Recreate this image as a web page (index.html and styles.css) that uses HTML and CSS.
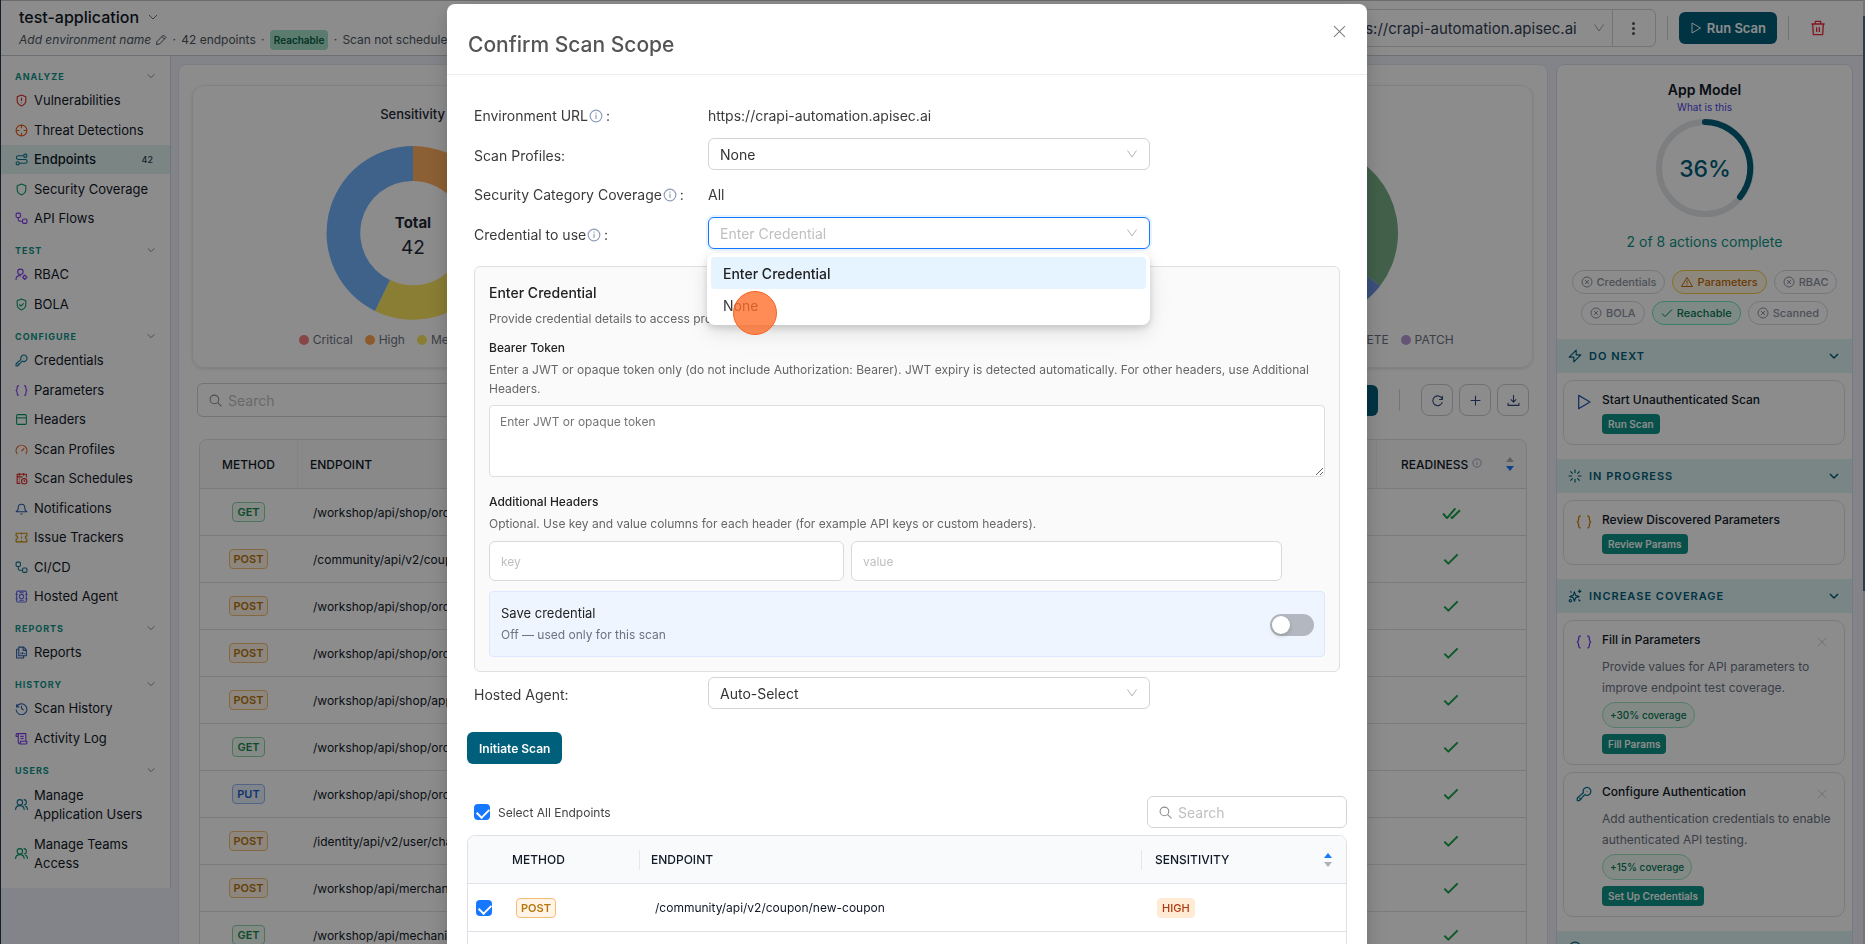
FILE: index.html
```
<!DOCTYPE html>
<html lang="en">

<head>
    <meta charset="utf-8">
    <title>Endpoints - test-application</title>
    <link rel="stylesheet" href="styles.css">
</head>

<body>
    <!-- icon sprite -->
    <svg class="sprite" aria-hidden="true">
        <symbol id="i-down" viewBox="0 0 24 24"><path d="M4 8l8 8 8-8" /></symbol>
        <symbol id="i-select" viewBox="0 0 24 24"><path d="M3 5l9 13 9-13" /></symbol>
        <symbol id="i-shield-alert" viewBox="0 0 24 24"><path d="M12 2l8 3v7c0 5-3 8-8 10-5-2-8-5-8-10V5zM12 7v6M12 16v1" /></symbol>
        <symbol id="i-target" viewBox="0 0 24 24"><circle cx="12" cy="12" r="10" /><path d="M12 2v6M12 16v6M2 12h6M16 12h6" /></symbol>
        <symbol id="i-route" viewBox="0 0 24 24"><circle cx="19" cy="5" r="3" /><circle cx="5" cy="19" r="3" /><path d="M16 5H6a3 3 0 0 0 0 7h13a3 3 0 0 1 0 7H8" /></symbol>
        <symbol id="i-shield" viewBox="0 0 24 24"><path d="M12 2l8 3v7c0 5-3 8-8 10-5-2-8-5-8-10V5z" /></symbol>
        <symbol id="i-shield-check" viewBox="0 0 24 24"><path d="M12 2l8 3v7c0 5-3 8-8 10-5-2-8-5-8-10V5zM8 12l3 3 5-5" /></symbol>
        <symbol id="i-flow" viewBox="0 0 24 24"><rect x="2" y="2" width="8" height="8" rx="2" /><rect x="14" y="13" width="8" height="8" rx="2" /><path d="M6 10v4a3 3 0 0 0 3 3h5" /></symbol>
        <symbol id="i-user-cog" viewBox="0 0 24 24"><circle cx="10" cy="7" r="5" /><path d="M2 22v-2a6 6 0 0 1 9-5" /><circle cx="18" cy="17" r="3" /><path d="M18 12v2M18 20v2M13 17h2M21 17h2" /></symbol>
        <symbol id="i-key" viewBox="0 0 24 24"><path d="M16 2a6 6 0 1 1-3 11l-8 9H2v-4l9-8a6 6 0 0 1 5-8zM5 18l3 3M16 8h1" /></symbol>
        <symbol id="i-braces" viewBox="0 0 24 24"><path d="M7 3c-3 0-3 1-3 4 0 3 0 4-2 5 2 1 2 2 2 5 0 3 0 4 3 4M17 3c3 0 3 1 3 4 0 3 0 4 2 5-2 1-2 2-2 5 0 3 0 4-3 4" /></symbol>
        <symbol id="i-header" viewBox="0 0 24 24"><rect x="3" y="3" width="18" height="18" rx="2" /><path d="M3 9h18" /></symbol>
        <symbol id="i-gauge" viewBox="0 0 24 24"><path d="M4 20a10 10 0 1 1 16 0M12 15l5-5" /></symbol>
        <symbol id="i-calendar" viewBox="0 0 24 24"><path d="M10 21H4V4h17v6M3 9h11M8 2v5M16 2v5M7 13h2M7 17h2" /><circle cx="17" cy="17" r="5" /><path d="M17 14v3h2" /></symbol>
        <symbol id="i-bell" viewBox="0 0 24 24"><path d="M2 18c3-1 4-3 4-8a6 6 0 0 1 12 0c0 5 1 7 4 8zM10 22h4" /></symbol>
        <symbol id="i-ticket" viewBox="0 0 24 24"><path d="M2 4h20v5a3 3 0 0 0 0 6v5H2v-5a3 3 0 0 0 0-6zM12 4v3M12 10v4M12 17v3" /></symbol>
        <symbol id="i-agent" viewBox="0 0 24 24"><rect x="3" y="2" width="18" height="20" rx="2" /><circle cx="12" cy="12" r="4" /><path d="M1 8h4M1 16h4M19 8h4M19 16h4M8 5h8M8 19h8" /></symbol>
        <symbol id="i-report" viewBox="0 0 24 24"><path d="M7 2h9l5 5v11H7zM7 6H3v16h13v-4M15 2v6h6M11 12v3M14 11v4M17 13v2" /></symbol>
        <symbol id="i-history" viewBox="0 0 24 24"><path d="M3 4v5h5M3 9a10 10 0 1 1-1 5M12 7v5l4 3" /></symbol>
        <symbol id="i-scroll" viewBox="0 0 24 24"><path d="M6 8H2V5a2 2 0 0 1 4 0v14a2 2 0 0 0 4 0v-2h12v3a2 2 0 0 1-2 2H8M4 3h16v14M10 8h6M10 12h6" /></symbol>
        <symbol id="i-users" viewBox="0 0 24 24"><circle cx="9" cy="8" r="5" /><path d="M1 22c0-5 3-8 8-8s8 3 8 8M16 3a5 5 0 0 1 0 10M19 15c3 1 4 4 4 7" /></symbol>
        <symbol id="i-pencil" viewBox="0 0 24 24"><path d="M3 21l1-6L17 2l5 5L9 20zM14 5l5 5" /></symbol>
        <symbol id="i-play" viewBox="0 0 24 24"><path d="M4 2l17 10L4 22z" /></symbol>
        <symbol id="i-trash" viewBox="0 0 24 24"><path d="M2 6h20M8 6V2h8v4M4 6l1 16h14l1-16M10 11v7M14 11v7" /></symbol>
        <symbol id="i-search" viewBox="0 0 24 24"><circle cx="10" cy="10" r="8" /><path d="M16 16l7 7" /></symbol>
        <symbol id="i-refresh" viewBox="0 0 24 24"><path d="M21 10a9 9 0 1 0 0 5M21 3v7h-6" /></symbol>
        <symbol id="i-plus" viewBox="0 0 24 24"><path d="M12 3v18M3 12h18" /></symbol>
        <symbol id="i-download" viewBox="0 0 24 24"><path d="M12 2v13M7 10l5 5 5-5M2 16v5h20v-5" /></symbol>
        <symbol id="i-close" viewBox="0 0 24 24"><path d="M2 2l20 20M22 2L2 22" /></symbol>
        <symbol id="i-info" viewBox="0 0 24 24"><circle cx="12" cy="12" r="10" /><path d="M12 10v7M12 6v2" /></symbol>
        <symbol id="i-x-circle" viewBox="0 0 24 24"><circle cx="12" cy="12" r="10" /><path d="M8 8l8 8M16 8l-8 8" /></symbol>
        <symbol id="i-warn" viewBox="0 0 24 24"><path d="M12 3L1 21h22zM12 9v6M12 17v2" /></symbol>
        <symbol id="i-check" viewBox="0 0 24 24"><path d="M2 13l6 6L22 5" /></symbol>
        <symbol id="i-double-check" viewBox="0 0 28 20"><path d="M1 10l6 7L20 2M13 15l2 2L27 5" /></symbol>
        <symbol id="i-bolt" viewBox="0 0 24 24"><path d="M14 2L2 14h8v8l12-12h-8z" /></symbol>
        <symbol id="i-loader" viewBox="0 0 24 24"><path d="M12 1v6M12 17v6M1 12h6M17 12h6M4 4l4 4M16 16l4 4M4 20l4-4M16 8l4-4" /></symbol>
        <symbol id="i-sparkles" viewBox="0 0 24 24"><path d="M11 5l2 6 6 2-6 2-2 6-2-6-6-2 6-2zM20 1v6M17 4h6M4 4l2 2M18 18l3 3" /><circle cx="4" cy="20" r="2" /></symbol>
        <symbol id="i-ring" viewBox="0 0 24 24"><circle cx="12" cy="12" r="10" /></symbol>
    </svg>

    <div class="shell">
        <div class="page">
            <header class="topbar">
                <div class="app-info">
                    <div class="app-name">test-application <svg class="icon ic-12"><use href="#i-down" /></svg></div>
                    <div class="app-meta">
                        <em>Add environment name</em>
                        <svg class="icon ic-12"><use href="#i-pencil" /></svg>
                        <span class="dot">·</span>
                        <span>42 endpoints</span>
                        <span class="dot">·</span>
                        <span class="badge-ok">Reachable</span>
                        <span class="dot">·</span>
                        <span>Scan not scheduled</span>
                    </div>
                </div>
                <div class="top-actions">
                    <div class="env-box">
                        <span class="env-url">https://crapi-automation.apisec.ai</span>
                        <svg class="icon ic-12 muted"><use href="#i-select" /></svg>
                        <button class="env-menu" aria-label="More"><i></i><i></i><i></i></button>
                    </div>
                    <span class="vline"></span>
                    <button class="btn-run"><svg class="icon ic-12"><use href="#i-play" /></svg>Run Scan</button>
                    <span class="vline"></span>
                    <button class="btn-trash" aria-label="Delete"><svg class="icon ic-16"><use href="#i-trash" /></svg></button>
                </div>
            </header>

            <div class="layout">
                <nav class="sidebar">
                    <section>
                        <h3>ANALYZE <svg class="icon ic-10"><use href="#i-down" /></svg></h3>
                        <ul>
                            <li><a href="#"><svg class="icon red"><use href="#i-shield-alert" /></svg>Vulnerabilities</a></li>
                            <li><a href="#"><svg class="icon orange"><use href="#i-target" /></svg>Threat Detections</a></li>
                            <li class="active"><a href="#"><svg class="icon cyan"><use href="#i-route" /></svg>Endpoints<span class="count">42</span></a></li>
                            <li><a href="#"><svg class="icon green"><use href="#i-shield" /></svg>Security Coverage</a></li>
                            <li><a href="#"><svg class="icon purple"><use href="#i-flow" /></svg>API Flows</a></li>
                        </ul>
                    </section>
                    <section>
                        <h3>TEST <svg class="icon ic-10"><use href="#i-down" /></svg></h3>
                        <ul>
                            <li><a href="#"><svg class="icon purple"><use href="#i-user-cog" /></svg>RBAC</a></li>
                            <li><a href="#"><svg class="icon green"><use href="#i-shield-check" /></svg>BOLA</a></li>
                        </ul>
                    </section>
                    <section>
                        <h3>CONFIGURE <svg class="icon ic-10"><use href="#i-down" /></svg></h3>
                        <ul>
                            <li><a href="#"><svg class="icon cyan"><use href="#i-key" /></svg>Credentials</a></li>
                            <li><a href="#"><svg class="icon purple"><use href="#i-braces" /></svg>Parameters</a></li>
                            <li><a href="#"><svg class="icon green"><use href="#i-header" /></svg>Headers</a></li>
                            <li><a href="#"><svg class="icon orange"><use href="#i-gauge" /></svg>Scan Profiles</a></li>
                            <li><a href="#"><svg class="icon red"><use href="#i-calendar" /></svg>Scan Schedules</a></li>
                            <li><a href="#"><svg class="icon blue"><use href="#i-bell" /></svg>Notifications</a></li>
                            <li><a href="#"><svg class="icon gold"><use href="#i-ticket" /></svg>Issue Trackers</a></li>
                            <li><a href="#"><svg class="icon cyan"><use href="#i-flow" /></svg>CI/CD</a></li>
                            <li><a href="#"><svg class="icon indigo"><use href="#i-agent" /></svg>Hosted Agent</a></li>
                        </ul>
                    </section>
                    <section>
                        <h3>REPORTS <svg class="icon ic-10"><use href="#i-down" /></svg></h3>
                        <ul>
                            <li><a href="#"><svg class="icon blue"><use href="#i-report" /></svg>Reports</a></li>
                        </ul>
                    </section>
                    <section>
                        <h3>HISTORY <svg class="icon ic-10"><use href="#i-down" /></svg></h3>
                        <ul>
                            <li><a href="#"><svg class="icon blue"><use href="#i-history" /></svg>Scan History</a></li>
                            <li><a href="#"><svg class="icon purple"><use href="#i-scroll" /></svg>Activity Log</a></li>
                        </ul>
                    </section>
                    <section class="users">
                        <h3>USERS <svg class="icon ic-10"><use href="#i-down" /></svg></h3>
                        <ul>
                            <li><a href="#"><svg class="icon cyan"><use href="#i-users" /></svg><span>Manage<br>Application Users</span></a></li>
                            <li><a href="#"><svg class="icon green"><use href="#i-users" /></svg><span>Manage Teams<br>Access</span></a></li>
                        </ul>
                    </section>
                </nav>

                <main class="content">
                    <div class="charts">
                        <div class="chart">
                            <h4>Sensitivity</h4>
                            <svg class="donut" viewBox="0 0 174 174">
                                <path fill="#ffae60" d="M87 0A87 87 0 0 1 174 87H139A52 52 0 0 0 87 35z" />
                                <path fill="#fbe35f" d="M174 87A87 87 0 0 1 49 165L64 134A52 52 0 0 0 139 87z" />
                                <path fill="#74b3fb" d="M49 165A87 87 0 0 1 87 0V35A52 52 0 0 0 64 134z" />
                                <text class="donut-label" x="87" y="82">Total</text>
                                <text class="donut-value" x="87" y="108">42</text>
                            </svg>
                            <div class="legend">
                                <span><i class="c-critical"></i>Critical</span>
                                <span><i class="c-high"></i>High</span>
                                <span><i class="c-medium"></i>Medium</span>
                                <span><i class="c-low"></i>Low</span>
                            </div>
                        </div>
                        <div class="chart chart-methods">
                            <h4>Methods</h4>
                            <svg class="donut" viewBox="0 0 174 174">
                                <path fill="#78ae87" d="M87 87V0A87 87 0 0 1 155 140z" />
                                <path fill="#6c92e2" d="M87 87L155 140A87 87 0 1 1 87 0z" />
                            </svg>
                            <div class="legend">
                                <span><i class="c-low"></i>GET</span>
                                <span><i class="c-high"></i>POST</span>
                                <span><i class="c-medium"></i>PUT</span>
                                <span><i class="c-critical"></i>DELETE</span>
                                <span><i class="c-patch"></i>PATCH</span>
                            </div>
                        </div>
                    </div>

                    <div class="toolbar">
                        <label class="search">
                            <svg class="icon ic-13"><use href="#i-search" /></svg>
                            <input type="search" placeholder="Search" aria-label="Search endpoints">
                        </label>
                        <button class="btn-filter">Filter</button>
                        <span class="vline"></span>
                        <button class="btn-icon" aria-label="Refresh"><svg class="icon ic-13"><use href="#i-refresh" /></svg></button>
                        <button class="btn-icon" aria-label="Add"><svg class="icon ic-13"><use href="#i-plus" /></svg></button>
                        <button class="btn-icon" aria-label="Download"><svg class="icon ic-13"><use href="#i-download" /></svg></button>
                    </div>

                    <div class="table-wrap">
                        <table class="endpoints">
                            <thead>
                                <tr>
                                    <th class="col-method">METHOD</th>
                                    <th>ENDPOINT</th>
                                    <th class="col-ready">
                                        <div>READINESS <svg class="icon ic-10"><use href="#i-info" /></svg><span class="sorter desc"></span></div>
                                    </th>
                                </tr>
                            </thead>
                            <tbody>
                                <tr><td><span class="tag get">GET</span></td><td>/workshop/api/shop/orders/all</td><td><svg class="icon double"><use href="#i-double-check" /></svg></td></tr>
                                <tr><td><span class="tag post">POST</span></td><td>/community/api/v2/coupon/new-coupon</td><td><svg class="icon tick"><use href="#i-check" /></svg></td></tr>
                                <tr><td><span class="tag post">POST</span></td><td>/workshop/api/shop/orders</td><td><svg class="icon tick"><use href="#i-check" /></svg></td></tr>
                                <tr><td><span class="tag post">POST</span></td><td>/workshop/api/shop/orders/return_order</td><td><svg class="icon tick"><use href="#i-check" /></svg></td></tr>
                                <tr><td><span class="tag post">POST</span></td><td>/workshop/api/shop/apply_coupon</td><td><svg class="icon tick"><use href="#i-check" /></svg></td></tr>
                                <tr><td><span class="tag get">GET</span></td><td>/workshop/api/shop/orders/{order_id}</td><td><svg class="icon tick"><use href="#i-check" /></svg></td></tr>
                                <tr><td><span class="tag put">PUT</span></td><td>/workshop/api/shop/orders/{order_id}</td><td><svg class="icon tick"><use href="#i-check" /></svg></td></tr>
                                <tr><td><span class="tag post">POST</span></td><td>/identity/api/v2/user/change-email</td><td><svg class="icon tick"><use href="#i-check" /></svg></td></tr>
                                <tr><td><span class="tag post">POST</span></td><td>/workshop/api/merchant/contact_mechanic</td><td><svg class="icon tick"><use href="#i-check" /></svg></td></tr>
                                <tr><td><span class="tag get">GET</span></td><td>/workshop/api/mechanic/mechanic_report</td><td><svg class="icon tick"><use href="#i-check" /></svg></td></tr>
                            </tbody>
                        </table>
                    </div>
                </main>

                <aside class="model">
                    <div class="model-head">
                        <h2>App Model</h2>
                        <a href="#">What is this</a>
                        <svg class="progress" viewBox="0 0 100 100">
                            <circle class="track" cx="50" cy="50" r="46" />
                            <path class="bar" d="M50 4A46 46 0 0 1 85 79" />
                            <text x="50" y="59">36%</text>
                        </svg>
                        <p>2 of 8 actions complete</p>
                        <div class="pills">
                            <span class="pill"><svg class="icon ic-12"><use href="#i-x-circle" /></svg>Credentials</span>
                            <span class="pill warn"><svg class="icon ic-12"><use href="#i-warn" /></svg>Parameters</span>
                            <span class="pill"><svg class="icon ic-12"><use href="#i-x-circle" /></svg>RBAC</span>
                            <span class="pill"><svg class="icon ic-12"><use href="#i-x-circle" /></svg>BOLA</span>
                            <span class="pill ok"><svg class="icon ic-12"><use href="#i-check" /></svg>Reachable</span>
                            <span class="pill"><svg class="icon ic-12"><use href="#i-x-circle" /></svg>Scanned</span>
                        </div>
                    </div>

                    <h3 class="group"><svg class="icon ic-14"><use href="#i-bolt" /></svg>DO NEXT<svg class="icon ic-12 end"><use href="#i-down" /></svg></h3>
                    <div class="group-body">
                        <div class="task">
                            <svg class="icon ic-16 blue"><use href="#i-play" /></svg>
                            <div><h4>Start Unauthenticated Scan</h4><button>Run Scan</button></div>
                        </div>
                    </div>
                    <h3 class="group"><svg class="icon ic-14"><use href="#i-loader" /></svg>IN PROGRESS<svg class="icon ic-12 end"><use href="#i-down" /></svg></h3>
                    <div class="group-body">
                        <div class="task">
                            <svg class="icon ic-16 amber"><use href="#i-braces" /></svg>
                            <div><h4>Review Discovered Parameters</h4><button>Review Params</button></div>
                        </div>
                    </div>
                    <h3 class="group"><svg class="icon ic-14"><use href="#i-sparkles" /></svg>INCREASE COVERAGE<svg class="icon ic-12 end"><use href="#i-down" /></svg></h3>
                    <div class="group-body">
                        <div class="task">
                            <svg class="icon ic-16 purple"><use href="#i-braces" /></svg>
                            <div>
                                <h4>Fill in Parameters<svg class="icon ic-10 dismiss"><use href="#i-close" /></svg></h4>
                                <p>Provide values for API parameters to improve endpoint test coverage.</p>
                                <span class="gain">+30% coverage</span>
                                <button>Fill Params</button>
                            </div>
                        </div>
                        <div class="task">
                            <svg class="icon ic-16 cyan"><use href="#i-key" /></svg>
                            <div>
                                <h4>Configure Authentication<svg class="icon ic-10 dismiss"><use href="#i-close" /></svg></h4>
                                <p>Add authentication credentials to enable authenticated API testing.</p>
                                <span class="gain">+15% coverage</span>
                                <button>Set Up Credentials</button>
                            </div>
                        </div>
                    </div>
                    <h3 class="group"><svg class="icon ic-14"><use href="#i-ring" /></svg>EXPAND CAPABILITY<svg class="icon ic-12 end"><use href="#i-down" /></svg></h3>
                </aside>
            </div>
        </div>
        <div class="rail"><div class="thumb"></div></div>
    </div>

    <div class="overlay">
        <div class="modal" role="dialog" aria-labelledby="modal-title">
            <div class="modal-head">
                <h1 id="modal-title">Confirm Scan Scope</h1>
                <button class="modal-close" aria-label="Close"><svg class="icon ic-13"><use href="#i-close" /></svg></button>
            </div>

            <div class="form">
                <div class="row text-row">
                    <span>Environment URL <svg class="icon info"><use href="#i-info" /></svg> :</span>
                    <span>https://crapi-automation.apisec.ai</span>
                </div>
                <div class="row">
                    <label for="profiles">Scan Profiles:</label>
                    <div class="select">
                        <select id="profiles"><option>None</option></select>
                        <svg class="icon ic-12"><use href="#i-select" /></svg>
                    </div>
                </div>
                <div class="row text-row">
                    <span>Security Category Coverage <svg class="icon info"><use href="#i-info" /></svg> :</span>
                    <span>All</span>
                </div>
                <div class="row">
                    <label for="credential">Credential to use <svg class="icon info"><use href="#i-info" /></svg> :</label>
                    <div class="select open">
                        <select id="credential"><option>Enter Credential</option><option>None</option></select>
                        <svg class="icon ic-12"><use href="#i-select" /></svg>
                        <ul class="options" role="listbox">
                            <li class="selected" role="option">Enter Credential</li>
                            <li role="option">None</li>
                            <li class="click-mark" aria-hidden="true"></li>
                        </ul>
                    </div>
                </div>

                <div class="cred-panel">
                    <h2>Enter Credential</h2>
                    <p>Provide credential details to access protected endpoints.</p>
                    <label class="field-title" for="token">Bearer Token</label>
                    <p>Enter a JWT or opaque token only (do not include Authorization: Bearer). JWT expiry is detected automatically. For other headers, use Additional Headers.</p>
                    <textarea id="token" placeholder="Enter JWT or opaque token"></textarea>
                    <h3 class="field-title">Additional Headers</h3>
                    <p>Optional. Use key and value columns for each header (for example API keys or custom headers).</p>
                    <div class="pair">
                        <input type="text" placeholder="key" aria-label="Header key">
                        <input type="text" placeholder="value" aria-label="Header value">
                    </div>
                    <div class="save-box">
                        <label for="save">Save credential<small>Off — used only for this scan</small></label>
                        <input type="checkbox" class="switch" id="save">
                    </div>
                </div>

                <div class="row">
                    <label for="agent">Hosted Agent:</label>
                    <div class="select">
                        <select id="agent"><option>Auto-Select</option></select>
                        <svg class="icon ic-12"><use href="#i-select" /></svg>
                    </div>
                </div>
            </div>

            <div class="modal-list">
                <button class="btn-initiate">Initiate Scan</button>
                <div class="list-tools">
                    <label class="select-all"><input type="checkbox" class="check" checked>Select All Endpoints</label>
                    <label class="search">
                        <svg class="icon ic-13"><use href="#i-search" /></svg>
                        <input type="search" placeholder="Search" aria-label="Search scope">
                    </label>
                </div>
                <div class="table-wrap">
                    <table class="scope">
                        <thead>
                            <tr>
                                <th class="col-check"></th>
                                <th class="col-m">METHOD</th>
                                <th class="split">ENDPOINT</th>
                                <th class="split col-s"><div>SENSITIVITY<span class="sorter asc"></span></div></th>
                            </tr>
                        </thead>
                        <tbody>
                            <tr>
                                <td><input type="checkbox" class="check" aria-label="Include endpoint" checked></td>
                                <td><span class="tag post">POST</span></td>
                                <td>/community/api/v2/coupon/new-coupon</td>
                                <td><span class="tag high">HIGH</span></td>
                            </tr>
                            <tr>
                                <td><input type="checkbox" class="check" aria-label="Include endpoint" checked></td>
                                <td><span class="tag post">POST</span></td>
                                <td>/workshop/api/shop/orders</td>
                                <td><span class="tag high">HIGH</span></td>
                            </tr>
                        </tbody>
                    </table>
                </div>
            </div>
        </div>
    </div>
</body>

</html>
```

FILE: styles.css
```
* {
    box-sizing: border-box;
}

body {
    margin: 0;
    height: 100vh;
    overflow: hidden;
    font-family: Inter, "Liberation Sans", sans-serif;
    font-size: 13px;
    color: #1f2937;
    background-color: #eff1f9;
}

h1, h2, h3, h4, p, ul {
    margin: 0;
    padding: 0;
}

ul {
    list-style: none;
}

a {
    color: inherit;
    text-decoration: none;
}

button, input, select, textarea {
    font-family: inherit;
}

.sprite {
    position: absolute;
    width: 0;
    height: 0;
}

.icon {
    width: 13px;
    height: 13px;
    flex: none;
    fill: none;
    stroke: currentColor;
    stroke-width: 2;
    stroke-linejoin: round;
}

.ic-10 { width: 10px; height: 10px; }
.ic-12 { width: 12px; height: 12px; }
.ic-13 { width: 13px; height: 13px; }
.ic-14 { width: 14px; height: 14px; }
.ic-16 { width: 16px; height: 16px; }

.red { color: #dc2626; }
.orange { color: #ea580c; }
.amber { color: #d97706; }
.cyan { color: #0e7490; }
.green { color: #059669; }
.purple { color: #7c3aed; }
.blue { color: #2b5fb0; }
.gold { color: #ca8a04; }
.indigo { color: #6366f1; }
.muted { color: #9ca3af; }

/* Page shell */
.shell {
    display: flex;
    height: 100vh;
    overflow: hidden;
    border-left: 1px solid #24384d;
}

.page {
    flex: 1;
    min-width: 0;
}

.rail {
    width: 2px;
    padding-top: 16px;
    background-color: #d5d5d8;
}

.thumb {
    height: 62%;
    background-color: #56678a;
}

/* Top bar */
.topbar {
    display: flex;
    justify-content: space-between;
    height: 56px;
    border-top: 1px solid #c4c4c8;
    border-bottom: 1px solid #c8cad3;
    background-color: #fff;
}

.app-info {
    padding: 4px 0 0 18px;
}

.app-name {
    display: flex;
    align-items: center;
    gap: 8px;
    height: 24px;
    font-size: 16px;
    font-weight: 500;
    color: #111827;
}

.app-name .icon {
    color: #6b7280;
}

.app-meta {
    display: flex;
    align-items: center;
    gap: 4px;
    height: 21px;
    font-size: 12px;
    color: #4b5563;
    white-space: nowrap;
}

.app-meta .dot {
    width: 6px;
    text-align: center;
}

.badge-ok {
    padding: 0 4px;
    border-radius: 4px;
    line-height: 20px;
    font-size: 10px;
    font-weight: 600;
    color: #065f46;
    background-color: #a7e0c8;
}

.top-actions {
    display: flex;
    align-items: flex-start;
    gap: 11px;
    padding: 8px 27px 0 0;
}

.env-box {
    display: flex;
    align-items: center;
    height: 38px;
    padding-left: 12px;
    border: 1px solid #d1d5db;
    border-radius: 6px;
    font-size: 15px;
    color: #334155;
}

.env-box > .icon {
    margin: 0 7px 0 16px;
}

.env-menu {
    display: flex;
    flex-direction: column;
    align-items: center;
    justify-content: center;
    gap: 2px;
    width: 43px;
    height: 36px;
    border: 0;
    border-left: 1px solid #d1d5db;
    background: none;
}

.env-menu i {
    width: 3px;
    height: 3px;
    border-radius: 50%;
    background-color: #4b5563;
}

.vline {
    width: 1px;
    height: 24px;
    margin-top: 7px;
    background-color: #d1d5db;
}

.btn-run {
    display: flex;
    align-items: center;
    gap: 5px;
    height: 32px;
    margin-top: 3px;
    padding: 0 11px;
    border: 0;
    border-radius: 6px;
    font-size: 13px;
    font-weight: 600;
    color: #fff;
    background-color: #005f7b;
}

.btn-trash {
    width: 36px;
    height: 32px;
    margin-top: 4px;
    border: 0;
    padding: 0;
    color: #ef2b3d;
    background: none;
}

/* Three columns under the top bar */
.layout {
    display: grid;
    grid-template-columns: 170px minmax(0, 1fr) 297px;
    align-items: start;
    padding-right: 10px;
}

.sidebar {
    padding: 12px 0 1px;
    border-right: 1px solid #d5d8e2;
    background-color: #fff;
}

.sidebar section {
    padding-bottom: 9px;
}

.sidebar h3 {
    display: flex;
    align-items: center;
    justify-content: space-between;
    height: 18px;
    padding: 0 14px 2px;
    font-size: 9px;
    font-weight: 700;
    letter-spacing: 1px;
    color: #0d9488;
}

.sidebar h3 .icon {
    color: #6b7280;
}

.sidebar li {
    height: 29px;
}

.sidebar li:nth-child(even) {
    height: 30px;
}

.sidebar .users li {
    height: 49px;
}

.sidebar a {
    display: flex;
    align-items: center;
    gap: 6px;
    height: 100%;
    padding: 0 14px;
    line-height: 19px;
    color: #111827;
}

.sidebar .active a {
    font-weight: 500;
    background-color: #def3f1;
}

.count {
    margin-left: auto;
    padding: 0 3px;
    font-size: 9px;
    color: #374151;
}

/* Main content */
.content {
    min-height: 100vh;
    margin: 8px 8px 0 7px;
    padding: 20px 14px 0 13px;
    border: 1px solid #e2e5ee;
    border-radius: 8px;
    background-color: #fff;
}

.charts {
    display: grid;
    grid-template-columns: 20fr 21fr 20fr;
    height: 283px;
    border: 1px solid #ececf0;
    border-radius: 12px;
    box-shadow: 0 1px 3px rgba(0, 0, 0, .12);
}

.chart {
    display: flex;
    flex-direction: column;
    align-items: center;
    padding-top: 18px;
}

.chart-methods {
    grid-column: 3;
}

.chart h4 {
    line-height: 20px;
    font-size: 13px;
    font-weight: 500;
}

.donut {
    width: 174px;
    height: 174px;
    margin: 22px 0 10px;
}

.donut text {
    text-anchor: middle;
    fill: #1f2937;
}

.donut-label {
    font-size: 15px;
    font-weight: 700;
}

.donut-value {
    font-size: 19px;
}

.legend {
    display: flex;
    gap: 12px;
    line-height: 20px;
    font-size: 12px;
    color: #6b7280;
}

.legend span {
    display: flex;
    align-items: center;
    gap: 4px;
}

.legend i {
    width: 10px;
    height: 10px;
    border-radius: 50%;
}

.c-critical { background-color: #f87f7f; }
.c-high { background-color: #ffa552; }
.c-medium { background-color: #fbe35f; }
.c-low { background-color: #74b3fb; }
.c-patch { background-color: #b79ad8; }

.toolbar {
    display: flex;
    align-items: center;
    gap: 6px;
    margin: 15px 4px 0 5px;
}

.search {
    display: flex;
    align-items: center;
    gap: 6px;
    height: 34px;
    padding: 0 11px;
    border: 1px solid #d4d4d4;
    border-radius: 6px;
    color: #8c8c8c;
    background-color: #fff;
}

.search input {
    flex: 1;
    min-width: 0;
    border: 0;
    padding: 0;
    outline: 0;
    font-size: 14px;
    background: none;
}

.search input::placeholder,
.pair input::placeholder {
    color: #bfbfbf;
}

.toolbar .search {
    width: 400px;
}

.btn-filter {
    width: 90px;
    height: 31px;
    margin-left: auto;
    border: 0;
    border-radius: 6px;
    color: #fff;
    background-color: #005f7b;
}

.toolbar .vline {
    margin: 0 15px;
    height: 22px;
}

.btn-icon {
    display: flex;
    align-items: center;
    justify-content: center;
    width: 32px;
    height: 32px;
    padding: 0;
    border: 1px solid #c9ccd4;
    border-radius: 8px;
    color: #33487a;
    background: none;
}

/* Tables */
.table-wrap {
    overflow: hidden;
    border: 1px solid #dfe1e6;
    border-radius: 8px 8px 0 0;
}

.content .table-wrap {
    margin: 22px 6px 0 7px;
}

table {
    width: 100%;
    border-collapse: separate;
    border-spacing: 0;
    table-layout: fixed;
    font-size: 12px;
    color: #111827;
}

th {
    height: 49px;
    padding: 0 12px;
    border-bottom: 1px solid #dfe1e6;
    text-align: left;
    font-size: 12px;
    font-weight: 500;
    color: #111827;
    background-color: #f9fafc;
}

td {
    height: 47px;
    padding: 0 16px;
    border-bottom: 1px solid #dfe1e6;
    white-space: nowrap;
}

.endpoints th + th {
    border-left: 1px solid #eceef2;
}

.col-method {
    width: 97px;
}

.endpoints .col-method,
.endpoints td:first-child,
.endpoints td:last-child {
    text-align: center;
}

.col-ready {
    width: 150px;
}

th div {
    display: flex;
    align-items: center;
    gap: 4px;
}

.col-ready div {
    padding-left: 12px;
}

.col-ready .icon {
    color: #8a94a6;
    margin-bottom: 2px;
}

.sorter {
    display: flex;
    flex-direction: column;
    gap: 4px;
    margin-left: auto;
}

.sorter::before,
.sorter::after {
    content: "";
    border: 4px solid transparent;
}

.sorter::before {
    border-top: 0;
    border-bottom: 5px solid #aeb1b5;
}

.sorter::after {
    border-bottom: 0;
    border-top: 5px solid #aeb1b5;
}

.sorter.asc::before {
    border-bottom-color: #1677ff;
}

.sorter.desc::after {
    border-top-color: #1677ff;
}

.tag {
    display: inline-block;
    padding: 0 4px;
    border: 1px solid;
    border-radius: 4px;
    line-height: 18px;
    font-size: 11px;
    font-weight: 600;
}

.get { color: #1b8a4b; border-color: #8fd1aa; background-color: #f0fbf4; }
.post { color: #b7740f; border-color: #f2bd76; background-color: #fff4e6; }
.put { color: #1d5fc4; border-color: #93b8f0; background-color: #eaf2ff; }
.high { color: #ad3a10; border-color: #ffebd3; background-color: #ffebd3; font-weight: 500; }

.tick {
    width: 16px;
    height: 16px;
    color: #16a34a;
    vertical-align: middle;
}

.double {
    width: 19px;
    height: 13px;
    color: #16a34a;
    vertical-align: middle;
}

.tick,
.double {
    stroke-width: 3;
}

/* App model panel */
.model {
    min-height: 100vh;
    margin-top: 8px;
    border: 1px solid #dcdfe8;
    border-radius: 8px;
    background-color: #fff;
}

.model-head {
    display: flex;
    flex-direction: column;
    align-items: center;
    height: 274px;
    padding-top: 15px;
}

.model-head h2 {
    line-height: 20px;
    font-size: 14px;
    font-weight: 600;
    color: #111827;
}

.model-head a {
    line-height: 14px;
    font-size: 10px;
    color: #4f46e5;
}

.progress {
    width: 100px;
    height: 100px;
    margin-top: 4px;
    fill: none;
    stroke-width: 6;
}

.track {
    stroke: #e3e5ea;
}

.bar {
    stroke: #005f7b;
    stroke-linecap: round;
}

.progress text {
    font-size: 23px;
    font-weight: 500;
    text-anchor: middle;
    stroke: none;
    fill: #005f7b;
}

.model-head p {
    margin-top: 14px;
    line-height: 20px;
    font-size: 14px;
    color: #0d9488;
}

.pills {
    display: flex;
    flex-wrap: wrap;
    justify-content: center;
    gap: 7px;
    margin-top: 18px;
}

.pill {
    display: flex;
    align-items: center;
    gap: 4px;
    height: 24px;
    padding: 0 8px;
    border: 1px solid #d5d8de;
    border-radius: 12px;
    font-size: 11px;
    font-weight: 500;
    color: #8b93a3;
}

.pill.warn {
    color: #c46a06;
    border-color: #f5c842;
    background-color: #fff8e6;
}

.pill.ok {
    color: #047857;
    border-color: #6ee7b7;
    background-color: #e6fbf2;
}

.group {
    display: flex;
    align-items: center;
    gap: 7px;
    height: 34px;
    padding: 0 12px 0 11px;
    font-size: 11px;
    font-weight: 600;
    letter-spacing: 1px;
    color: #005f7b;
    background-color: #dff2f2;
}

.group .end {
    margin-left: auto;
    stroke-width: 3;
}

.group-body {
    display: flex;
    flex-direction: column;
    gap: 7px;
    padding: 7px 7px 14px 6px;
}

.task {
    display: flex;
    gap: 10px;
    padding: 10px 12px 10px;
    border: 1px solid #dfe1e6;
    border-radius: 10px;
}

.task > .icon {
    margin-top: 3px;
}

.task > div {
    flex: 1;
    min-width: 0;
}

.task h4 {
    display: flex;
    align-items: center;
    justify-content: space-between;
    height: 16px;
    margin-bottom: 7px;
    font-size: 12px;
    font-weight: 500;
    color: #111827;
}

.dismiss {
    margin: 6px 5px 0 0;
    color: #c3c7cf;
}

.task p {
    line-height: 21px;
    margin-right: -8px;
    padding-top: 2px;
    font-size: 12px;
    color: #6b7280;
}

.gain {
    display: table;
    height: 26px;
    margin: 4px 0 6px;
    padding: 0 7px;
    border: 1px solid #9be3c0;
    border-radius: 13px;
    line-height: 24px;
    font-size: 10px;
    font-weight: 500;
    color: #047857;
    background-color: #effcf5;
}

.task button {
    display: block;
    height: 20px;
    padding: 0 6px;
    border: 0;
    border-radius: 4px;
    font-size: 10px;
    font-weight: 600;
    color: #fff;
    background-color: #0d9488;
}

/* Scan scope dialog */
.overlay {
    position: fixed;
    inset: 0;
    padding: 4px 51px 0 0;
    overflow: hidden;
    background-color: rgba(0, 0, 0, .45);
}

.modal {
    width: 920px;
    max-width: 100%;
    min-height: 100vh;
    margin: 0 auto;
    border-radius: 8px;
    color: #434343;
    background-color: #fff;
    box-shadow: 0 6px 16px rgba(0, 0, 0, .12), 0 9px 28px rgba(0, 0, 0, .1);
}

.modal-head {
    display: flex;
    justify-content: space-between;
    height: 71px;
    padding: 0 21px;
    border-bottom: 1px solid #ececec;
}

.modal-head h1 {
    line-height: 82px;
    font-size: 21px;
    font-weight: 500;
    color: #555;
}

.modal-close {
    height: 20px;
    margin-top: 19px;
    padding: 0;
    border: 0;
    color: #808080;
    background: none;
}

.form {
    display: flex;
    flex-direction: column;
    gap: 8px;
    padding: 24px 27px 0;
}

.row {
    display: grid;
    grid-template-columns: 234px 442px;
    align-items: center;
    min-height: 32px;
    font-size: 14px;
    color: #3a3a3a;
}

.row > label,
.row > span {
    padding-top: 2px;
}

.text-row {
    min-height: 31px;
}

.info {
    width: 14px;
    height: 14px;
    margin: 0 -1px -2px -3px;
    color: #8f9bb8;
}

.select {
    position: relative;
}

.select select {
    display: block;
    width: 100%;
    height: 32px;
    padding: 0 11px;
    border: 1px solid #d4d4d4;
    border-radius: 6px;
    appearance: none;
    font-size: 14px;
    color: #333;
    background-color: #fff;
}

.select > .icon {
    position: absolute;
    top: 10px;
    right: 12px;
    color: #b5b5b5;
}

.select.open select {
    border-color: #1677ff;
    color: #bfbfbf;
    box-shadow: 0 0 0 2px rgba(5, 145, 255, .1);
}

.options {
    position: absolute;
    top: 36px;
    left: -1px;
    right: 0;
    z-index: 2;
    padding: 4px;
    border-radius: 8px;
    background-color: #fff;
    box-shadow: 0 6px 16px rgba(0, 0, 0, .08), 0 3px 6px rgba(0, 0, 0, .12), 0 9px 28px rgba(0, 0, 0, .05);
}

.options li {
    padding: 2px 12px 0;
    border-radius: 4px;
    line-height: 30px;
}

.options .selected {
    font-weight: 500;
    color: #222;
    background-color: #e6f4ff;
}

.options .click-mark {
    position: absolute;
    top: 38px;
    left: 26px;
    width: 44px;
    height: 44px;
    border: 1px solid #f9621f;
    border-radius: 50%;
    background-color: rgba(255, 107, 38, .78);
}

.cred-panel {
    margin: 9px 0 -3px;
    padding: 14px;
    border: 1px solid #e0e0e0;
    border-radius: 6px;
    background-color: #fafafa;
}

.cred-panel h2 {
    line-height: 24px;
    font-size: 14px;
    font-weight: 500;
    color: #222;
}

.cred-panel p {
    margin-top: 3px;
    line-height: 19px;
    font-size: 12px;
    color: #666;
}

.cred-panel h2 + p {
    margin-top: 4px;
}

.field-title {
    display: block;
    margin-top: 10px;
    line-height: 19px;
    font-size: 12px;
    font-weight: 500;
    color: #222;
}

.cred-panel textarea {
    display: block;
    width: 100%;
    height: 72px;
    margin: 7px 0 15px;
    padding: 8px 10px;
    border: 1px solid #dedede;
    border-radius: 4px;
    font-size: 12px;
    background-color: #fff;
}

.pair {
    display: grid;
    grid-template-columns: 355px 431px;
    gap: 7px;
    margin: 8px 0 10px;
}

.pair input {
    min-width: 0;
    height: 40px;
    padding: 0 11px;
    border: 1px solid #d9d9d9;
    border-radius: 6px;
    font-size: 12px;
    background-color: #fff;
}

.save-box {
    display: flex;
    align-items: center;
    justify-content: space-between;
    height: 66px;
    padding: 0 10px 0 11px;
    border: 1px solid #dbe8fd;
    border-radius: 4px;
    background-color: #eff5ff;
}

.save-box label {
    line-height: 22px;
    font-size: 13px;
    color: #222;
}

.save-box small {
    display: block;
    font-size: 12px;
    color: #6b7280;
}

.switch {
    width: 44px;
    height: 22px;
    margin: 1px 0 0;
    padding: 2px;
    border-radius: 11px;
    appearance: none;
    background-color: #b3b8c0;
}

.switch::before {
    content: "";
    display: block;
    width: 18px;
    height: 18px;
    border-radius: 50%;
    background-color: #fff;
    box-shadow: 0 2px 4px rgba(0, 35, 11, .2);
}

.modal-list {
    padding: 23px 20px 0;
}

.btn-initiate {
    height: 32px;
    padding: 0 12px;
    border: 0;
    border-radius: 6px;
    font-size: 12px;
    font-weight: 600;
    color: #fff;
    background-color: #005f7b;
}

.list-tools {
    display: flex;
    align-items: center;
    justify-content: space-between;
    margin: 32px 0 7px;
    padding-left: 7px;
}

.list-tools .search {
    width: 200px;
    height: 32px;
}

.select-all {
    display: flex;
    align-items: center;
    gap: 8px;
    font-size: 12px;
}

.check {
    display: block;
    width: 16px;
    height: 16px;
    margin: 0;
    border-radius: 4px;
    appearance: none;
    background-color: #1677ff;
}

.check::before {
    content: "";
    display: block;
    width: 6px;
    height: 10px;
    margin: 2px 0 0 5px;
    border: solid #fff;
    border-width: 0 2px 2px 0;
    transform: rotate(45deg);
}

.scope th,
.scope td {
    height: 48px;
}

.scope .col-check {
    width: 32px;
}

.scope td:first-child {
    padding: 0 8px;
}

.col-m {
    width: 139px;
}

.scope .col-s {
    width: 205px;
    padding-left: 14px;
}

.col-s .sorter {
    margin-right: 2px;
}

.split {
    background-image: linear-gradient(#e5e7eb, #e5e7eb);
    background-repeat: no-repeat;
    background-position: left center;
    background-size: 1px 20px;
}
```
